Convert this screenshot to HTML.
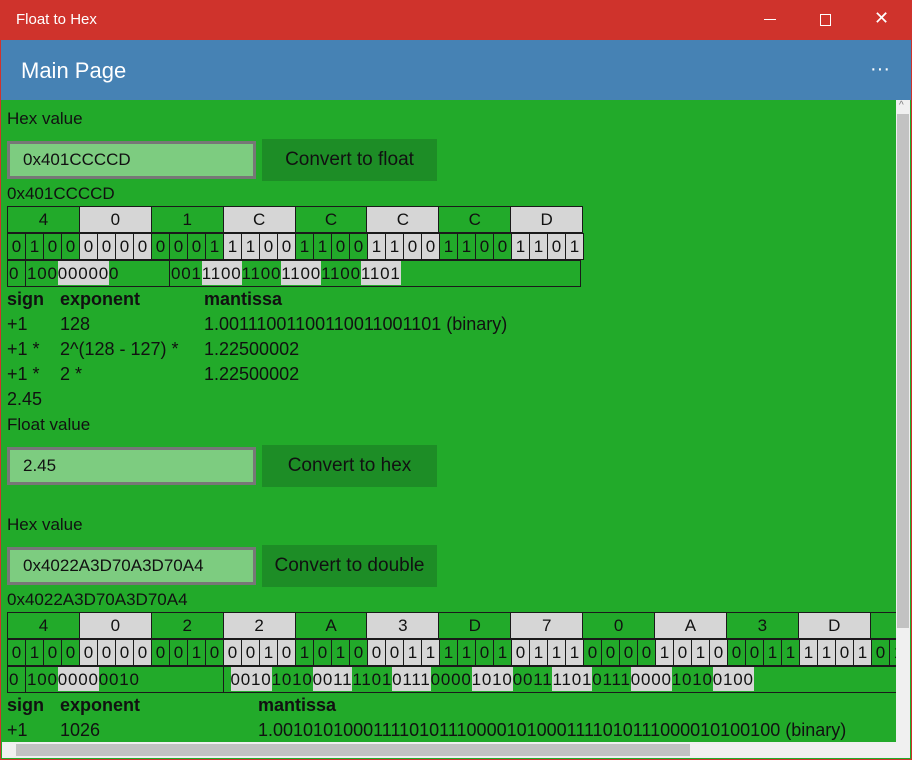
<!DOCTYPE html>
<html><head><meta charset="utf-8"><style>
*{margin:0;padding:0;box-sizing:border-box}
body{width:912px;height:760px;overflow:hidden;position:relative;font-family:"Liberation Sans",sans-serif;font-size:18px;color:#111;background:#22aa2a}
.a{position:absolute;white-space:nowrap}
.l{font-size:17px}
#tb{left:0;top:0;width:912px;height:40px;background:#cf332c;color:#fff}
#hd{left:0;top:40px;width:912px;height:60px;background:#4682b4;color:#fff}
.tx{border:3px solid #777;background:#7dcc80;padding-left:13px;line-height:32px;font-size:17px}
.bt{background:#1d8d26;text-align:center;line-height:42px;font-size:19px}
.row{position:absolute;display:flex;height:27px}
.row div{border:1px solid #1a1a1a;height:27px;line-height:25px;text-align:center;flex:none;margin-right:-1px}
.h div{width:72.9px;font-size:17px}
.b div{width:19px;font-size:17px}
.g{background:#d6d6d6}
.f{position:absolute;display:flex;height:27px;line-height:25px;font-size:17px;letter-spacing:0.8px}
.f>div{border:1px solid #1a1a1a;height:27px;flex:none;margin-right:-1px;padding-left:1px}
span.g{display:inline-block;height:24px}
b{font-weight:bold}
</style></head><body>
<div class="a" id="tb"><span class="a" style="left:16px;top:11px;font-size:15px">Float to Hex</span>
<span class="a" style="left:764px;top:19px;width:12px;height:1px;background:#fff"></span>
<span class="a" style="left:820px;top:14px;width:11px;height:12px;border:1px solid #fff"></span>
<span class="a" style="left:874px;top:8px;font-size:18px">✕</span></div>
<div class="a" id="hd"><span class="a" style="left:21px;top:18px;font-size:22px">Main Page</span><span class="a" style="left:870px;top:18px;font-size:20px">···</span></div>

<div class="a l" style="left:7px;top:109px">Hex value</div>
<div class="a tx" style="left:7px;top:141px;width:249px;height:38px">0x401CCCCD</div>
<div class="a bt" style="left:262px;top:139px;width:175px;height:42px">Convert to float</div>
<div class="a l" style="left:7px;top:184px">0x401CCCCD</div>
<div class="row h" style="left:7px;top:206px"><div>4</div><div class="g">0</div><div>1</div><div class="g">C</div><div>C</div><div class="g">C</div><div>C</div><div class="g">D</div></div>
<div class="row b" style="left:7px;top:233px"><div>0</div><div>1</div><div>0</div><div>0</div><div class="g">0</div><div class="g">0</div><div class="g">0</div><div class="g">0</div><div>0</div><div>0</div><div>0</div><div>1</div><div class="g">1</div><div class="g">1</div><div class="g">0</div><div class="g">0</div><div>1</div><div>1</div><div>0</div><div>0</div><div class="g">1</div><div class="g">1</div><div class="g">0</div><div class="g">0</div><div>1</div><div>1</div><div>0</div><div>0</div><div class="g">1</div><div class="g">1</div><div class="g">0</div><div class="g">1</div></div>
<div class="f" style="left:7px;top:260px"><div style="width:19px">0</div><div style="width:145px">100<span class="g">00000</span>0</div><div style="width:412px">001<span class="g">1100</span>1100<span class="g">1100</span>1100<span class="g">1101</span></div></div>

<div class="a" style="left:7px;top:289px"><b>sign</b></div><div class="a" style="left:60px;top:289px"><b>exponent</b></div><div class="a" style="left:204px;top:289px"><b>mantissa</b></div>
<div class="a" style="left:7px;top:314px">+1</div><div class="a" style="left:60px;top:314px">128</div><div class="a" style="left:204px;top:314px">1.00111001100110011001101 (binary)</div>
<div class="a" style="left:7px;top:339px">+1 *</div><div class="a" style="left:60px;top:339px">2^(128 - 127) *</div><div class="a" style="left:204px;top:339px">1.22500002</div>
<div class="a" style="left:7px;top:364px">+1 *</div><div class="a" style="left:60px;top:364px">2 *</div><div class="a" style="left:204px;top:364px">1.22500002</div>
<div class="a" style="left:7px;top:389px">2.45</div>
<div class="a l" style="left:7px;top:415px">Float value</div>
<div class="a tx" style="left:7px;top:447px;width:249px;height:38px">2.45</div>
<div class="a bt" style="left:262px;top:445px;width:175px;height:42px">Convert to hex</div>
<div class="a l" style="left:7px;top:515px">Hex value</div>
<div class="a tx" style="left:7px;top:547px;width:249px;height:38px">0x4022A3D70A3D70A4</div>
<div class="a bt" style="left:262px;top:545px;width:175px;height:42px">Convert to double</div>
<div class="a l" style="left:7px;top:590px">0x4022A3D70A3D70A4</div>
<div class="a" style="left:0;top:612px;width:897px;height:82px;overflow:hidden">
<div class="row h" style="left:7px;top:0"><div>4</div><div class="g">0</div><div>2</div><div class="g">2</div><div>A</div><div class="g">3</div><div>D</div><div class="g">7</div><div>0</div><div class="g">A</div><div>3</div><div class="g">D</div><div>7</div></div>
<div class="row b" style="left:7px;top:27px"><div>0</div><div>1</div><div>0</div><div>0</div><div class="g">0</div><div class="g">0</div><div class="g">0</div><div class="g">0</div><div>0</div><div>0</div><div>1</div><div>0</div><div class="g">0</div><div class="g">0</div><div class="g">1</div><div class="g">0</div><div>1</div><div>0</div><div>1</div><div>0</div><div class="g">0</div><div class="g">0</div><div class="g">1</div><div class="g">1</div><div>1</div><div>1</div><div>0</div><div>1</div><div class="g">0</div><div class="g">1</div><div class="g">1</div><div class="g">1</div><div>0</div><div>0</div><div>0</div><div>0</div><div class="g">1</div><div class="g">0</div><div class="g">1</div><div class="g">0</div><div>0</div><div>0</div><div>1</div><div>1</div><div class="g">1</div><div class="g">1</div><div class="g">0</div><div class="g">1</div><div>0</div><div>1</div><div>1</div><div>1</div></div>
<div class="f" style="left:7px;top:54px"><div style="width:19px">0</div><div style="width:199px">100<span class="g">0000</span>0010</div><div style="width:700px">&nbsp;<span class="g">0010</span>1010<span class="g">0011</span>1101<span class="g">0111</span>0000<span class="g">1010</span>0011<span class="g">1101</span>0111<span class="g">0000</span>1010<span class="g">0100</span></div></div>
</div>
<div class="a" style="left:7px;top:695px"><b>sign</b></div><div class="a" style="left:60px;top:695px"><b>exponent</b></div><div class="a" style="left:258px;top:695px"><b>mantissa</b></div>
<div class="a" style="left:7px;top:720px">+1</div><div class="a" style="left:60px;top:720px">1026</div><div class="a" style="left:258px;top:720px;width:638px;overflow:hidden">1.0010101000111101011100001010001111010111000010100100 (binary)</div>

<div class="a" style="left:896px;top:100px;width:14px;height:642px;background:#f0f0f0"></div>
<div class="a" style="left:897px;top:114px;width:12px;height:514px;background:#c2c2c2"></div>
<div class="a" style="left:899px;top:100px;font-size:10px;color:#777">^</div>
<div class="a" style="left:2px;top:742px;width:908px;height:16px;background:#f0f0f0"></div>
<div class="a" style="left:16px;top:744px;width:674px;height:12px;background:#c2c2c2"></div>
<div class="a" style="left:0;top:0;width:912px;height:760px;border:1px solid #cf332c;pointer-events:none"></div>
</body></html>
